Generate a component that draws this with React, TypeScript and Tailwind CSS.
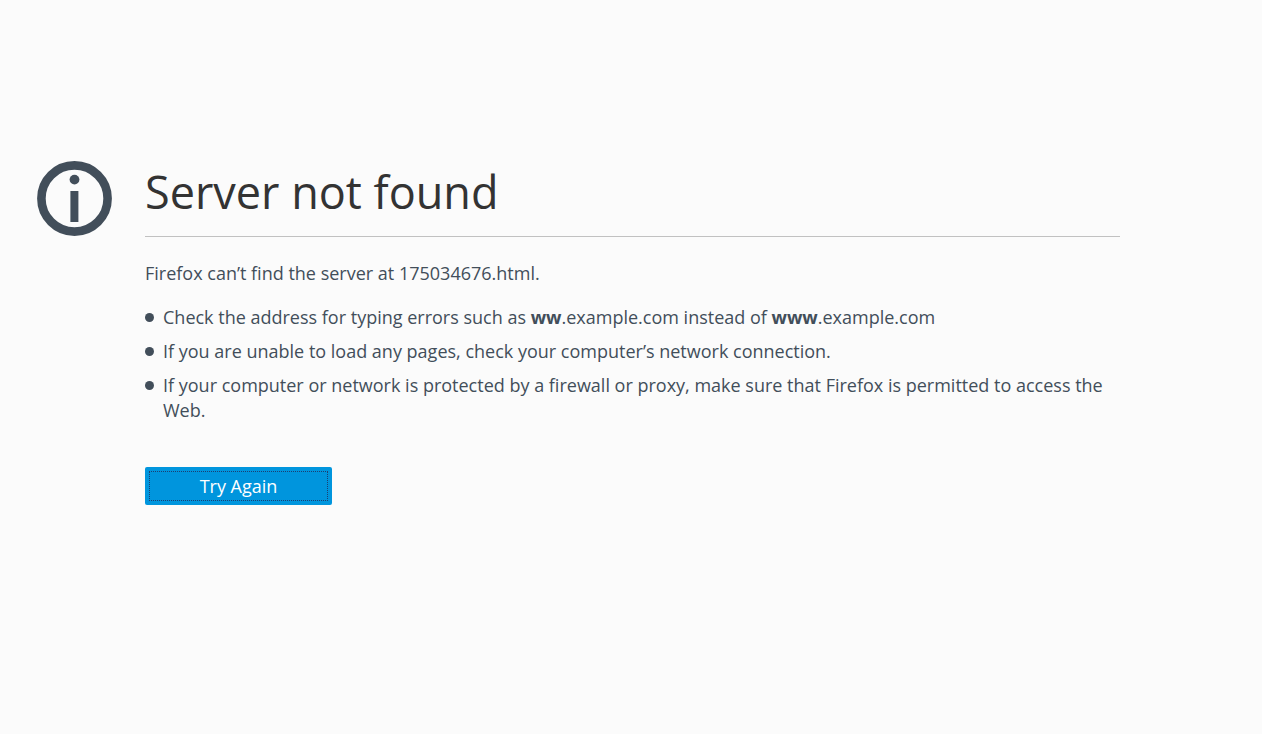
import React from 'react'

type Tip = {
  id: string;
  text: React.ReactNode;
};

const tips: Tip[] = [
  {
    id: "address",
    text: <>Check the address for typing errors such as <strong>ww</strong>.example.com instead of <strong>www</strong>.example.com</>,
  },
  {
    id: "connection",
    text: "If you are unable to load any pages, check your computer’s network connection.",
  },
  {
    id: "firewall",
    text: "If your computer or network is protected by a firewall or proxy, make sure that Firefox is permitted to access the Web.",
  },
];

function InfoIcon() {
  return (
    <svg viewBox="0 0 75 75" className="mt-px size-[75px] shrink-0 text-[#424e5a]" aria-hidden="true">
      <circle cx="37.5" cy="37.5" r="33.1" fill="none" stroke="currentColor" strokeWidth="8.6" />
      <circle cx="37.5" cy="18.6" r="4.9" fill="currentColor" />
      <rect x="33.4" y="30" width="8" height="31" fill="currentColor" />
    </svg>
  )
}

export default function App() {
  return (
    <main
      className="flex min-h-screen items-start gap-[33px] bg-[#fbfbfb] pt-40 pr-[142px] pb-16 pl-[37px]
        font-['Open_Sans','Noto_Sans',sans-serif] text-[18px] leading-[25px] text-[#424e5a]"
    >
      <InfoIcon />
      <div className="min-w-0 flex-1">
        <h1 className="border-b border-[#c1c1c1] pt-0.5 pb-3.5 text-[45px] leading-[60px] text-[#333333]">
          Server not found
        </h1>
        <p className="mt-6">Firefox can’t find the server at 175034676.html.</p>
        <ul className="mt-[19px] space-y-[9px]">
          {tips.map((tip) => (
            <li key={tip.id} className="flex">
              <span className="mt-2 mr-[9px] size-[9px] shrink-0 rounded-full bg-[#424e5a]" />
              <span>{tip.text}</span>
            </li>
          ))}
        </ul>
        <button
          type="button"
          className="mt-11 h-[38px] w-[187px] rounded-xs bg-[#0095dd] p-1 text-white"
        >
          <span className="flex h-full items-center justify-center border border-dotted border-[#1d3f70]">
            Try Again
          </span>
        </button>
      </div>
    </main>
  )
}
